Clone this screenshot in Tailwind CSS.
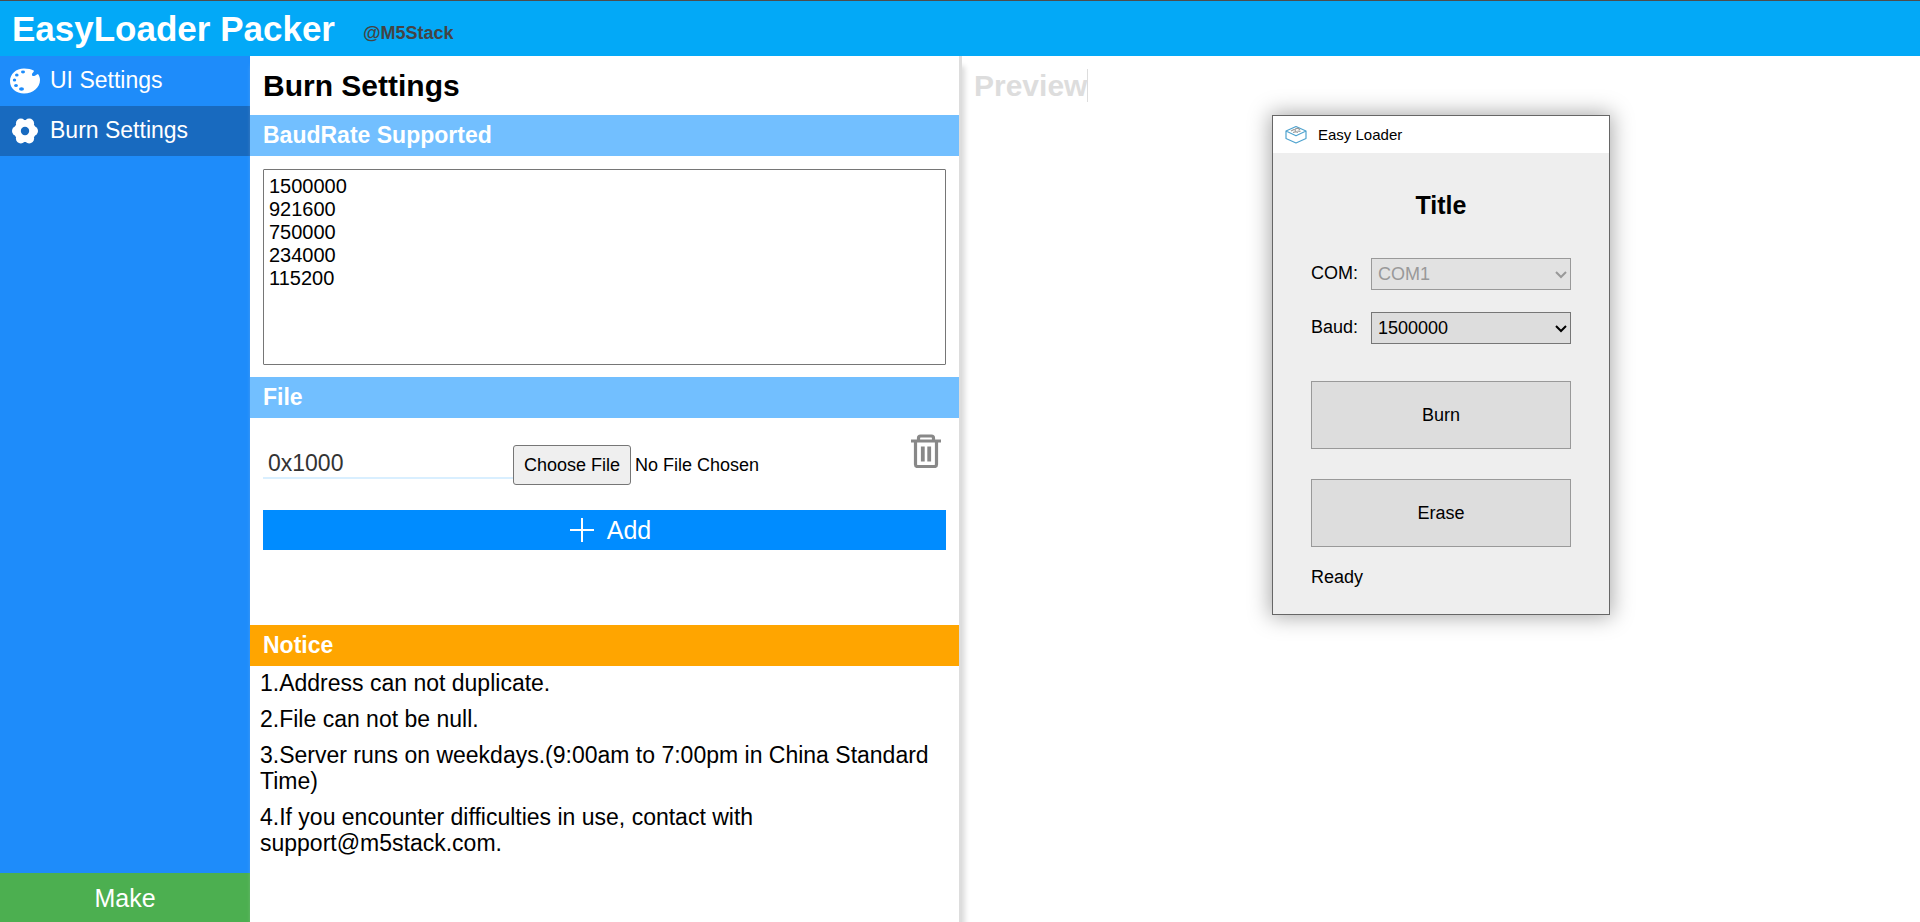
<!DOCTYPE html>
<html lang="en">
<head>
<meta charset="utf-8">
<meta name="viewport" content="width=device-width, initial-scale=1">
<title>EasyLoader Packer</title>
<script src="https://cdn.jsdelivr.net/npm/@tailwindcss/browser@4"></script>
</head>
<body class="flex h-screen flex-col overflow-hidden bg-white font-['Liberation_Sans',Arial,sans-serif] text-black">
  <header class="flex h-14 shrink-0 items-end gap-7 border-t border-[#4d4d4d] bg-[#03a9f7] px-3 pb-[7px]">
    <h1 class="text-[35px] leading-10 font-bold text-white">EasyLoader Packer</h1>
    <span class="text-[18px] leading-8 font-bold text-[#444]">@M5Stack</span>
  </header>

  <div class="flex min-h-0 flex-1">
    <nav class="flex w-[250px] shrink-0 flex-col bg-[#1e8cfa] text-[23px] text-white">
      <a href="#ui" class="flex h-[50px] items-center gap-2.5 px-2.5">
        <svg class="size-[30px]" viewBox="0 0 30 30" aria-hidden="true">
          <path fill="#fff" d="M14 2.500C6 2.500 0 8 0 15.200 0 22.200 6 27.500 14 27.500c9 0 16-6 16-13.500 0-2.500-.8-4.500-2-6-1.500.3-2.500 1.800-4 2-1.500.2-2.300-.6-2-2 .3-1.300 1.800-2 2-3.300C21.500 3.200 18 2.500 14 2.500z"/>
          <g fill="#1e8cfa"><ellipse cx="13" cy="6" rx="2" ry="1.400"/><ellipse cx="6.800" cy="9" rx="1.800" ry="1.500"/><ellipse cx="4.500" cy="14" rx="1.700" ry="1.500"/><ellipse cx="6" cy="19.500" rx="1.900" ry="1.600"/><ellipse cx="11.500" cy="23" rx="2.500" ry="1.800"/></g>
        </svg>
        <span class="pb-0.5">UI Settings</span>
      </a>
      <a href="#burn" aria-current="page" class="flex h-[50px] items-center gap-2.5 bg-[#186abf] px-2.5">
        <svg class="size-[30px]" viewBox="0 0 30 30" aria-hidden="true">
          <g fill="#fff"><circle cx="15" cy="15" r="11"/><circle cx="6.800" cy="15" r="4.800"/><circle cx="23.200" cy="15" r="4.800"/><circle cx="10.800" cy="7.400" r="4.900"/><circle cx="19.200" cy="7.400" r="4.900"/><circle cx="10.800" cy="22.600" r="4.900"/><circle cx="19.200" cy="22.600" r="4.900"/></g>
          <circle cx="15" cy="15" r="4.200" fill="#186abf"/>
        </svg>
        <span class="pb-0.5">Burn Settings</span>
      </a>
      <button type="button" class="mt-auto h-[49px] bg-[#4caf50] pt-0.5 text-[25px]">Make</button>
    </nav>

    <main class="z-10 min-w-0 flex-[709_1_0%] border-r-[3px] border-[#ddd] bg-white shadow-[3px_10px_5px_#ddd]">
      <h2 class="px-[13px] pt-[13px] pb-3 text-[30px] leading-[34px] font-bold">Burn Settings</h2>

      <h3 id="baudrates-title" class="bg-[#72bfff] px-[13px] py-2 text-[23px] leading-[25px] font-bold text-white">BaudRate Supported</h3>
      <div class="px-[13px] pt-[13px] pb-3">
        <textarea aria-labelledby="baudrates-title" class="block h-[196px] w-full resize-none rounded-[1px] border border-[#767676] px-[5px] py-[5px] text-[20px] leading-[23px]">1500000
921600
750000
234000
115200</textarea>
      </div>

      <h3 class="bg-[#72bfff] px-[13px] py-2 text-[23px] leading-[25px] font-bold text-white">File</h3>
      <div class="px-[13px] pt-3">
        <div class="flex items-start">
          <input type="text" aria-label="Address" value="0x1000" class="mt-4 h-[33px] w-[250px] border-b-2 border-[#d9efff] px-[5px] pt-1 text-[23px] text-[#333] outline-none">
          <label for="file" class="mt-[15px] flex h-10 items-center rounded-[3px] border border-[#767676] bg-[#efefef] px-2.5 text-[18px]">Choose File</label>
          <input id="file" type="file" class="sr-only">
          <span class="mt-[15px] ml-1 text-[18px] leading-10">No File Chosen</span>
          <button type="button" aria-label="Delete file" class="mt-0.5 mr-1 ml-auto">
            <svg class="h-9 w-8" viewBox="0 0 32 36" fill="none" stroke="#888" stroke-width="3.200" stroke-linejoin="round" aria-hidden="true">
              <path d="M1 9h30M8.500 9V6q0-2 2-2h11q2 0 2 2v3M5.500 9v23.500q0 2 2 2h17q2 0 2-2V9"/>
              <path stroke-width="3.800" d="M12.800 14.500v15M19.200 14.500v15"/>
            </svg>
          </button>
        </div>
        <button type="button" class="mt-[25px] flex h-10 w-full items-center justify-center gap-[13px] bg-[#008cff] pl-3 text-[25px] text-white">
          <svg class="size-6" viewBox="0 0 24 24" stroke="#fff" stroke-width="2" aria-hidden="true"><path d="M12 0v24M0 12h24"/></svg>
          <span class="pt-0.5">Add</span>
        </button>
      </div>

      <h3 class="mt-[75px] bg-[#ffa500] px-[13px] py-2 text-[23px] leading-[25px] font-bold text-white">Notice</h3>
      <div class="flex flex-col gap-2.5 px-2.5 pt-1 text-[23px] leading-[26px]">
        <p>1.Address can not duplicate.</p>
        <p>2.File can not be null.</p>
        <p>3.Server runs on weekdays.(9:00am to 7:00pm in China Standard Time)</p>
        <p>4.If you encounter difficulties in use, contact with support@m5stack.com.</p>
      </div>
    </main>

    <aside class="flex min-w-0 flex-[958_1_0%] flex-col items-center">
      <h2 class="mt-[13px] ml-3 self-start border-r border-[#ddd] text-[30px] leading-[33px] font-bold text-[#ddd]">Preview</h2>
      <section class="mt-[13px] w-[338px] border border-[#666] bg-[#eee] text-[18px] shadow-[0_0_20px_2px_#aaa]">
        <div class="flex h-[37px] items-center gap-[11px] bg-white px-3 text-[15px]">
          <svg class="h-5 w-[22px]" viewBox="0 0 22 20" fill="none" stroke="#4fa3cf" stroke-width="1.200" stroke-linejoin="round" aria-hidden="true">
            <path d="M11 1.500 21 6v7.500L11 18 1 13.500V6zM1 6l10 4.800L21 6"/>
            <path stroke="#999" d="M6 6l3-1.500 2 1M10 4l3-.8 2 1.500M8 7.500l3-.8 2 .8M12.500 6l3 .300"/>
          </svg>
          <span class="pt-px">Easy Loader</span>
        </div>
        <div class="px-[38px] pt-[37px] pb-6">
          <h3 class="text-center text-[25px] leading-[30px] font-bold">Title</h3>
          <div class="mt-[38px] flex justify-between">
            <label for="com" class="leading-[30px]">COM:</label>
            <div class="relative w-[200px]">
              <select id="com" disabled class="block h-8 w-full appearance-none border border-[#999] bg-[#e2e2e2] px-1.5 text-[#999]"><option>COM1</option></select>
              <svg class="pointer-events-none absolute top-3 right-1 h-2.5 w-3" viewBox="0 0 12 10" fill="none" stroke="#999" stroke-width="2" aria-hidden="true"><path d="M1 2l5 5 5-5"/></svg>
            </div>
          </div>
          <div class="mt-[22px] flex justify-between">
            <label for="baud" class="leading-[30px]">Baud:</label>
            <div class="relative w-[200px]">
              <select id="baud" class="block h-8 w-full appearance-none border border-[#767676] bg-[#ddd] px-1.5"><option>1500000</option><option>921600</option><option>750000</option><option>234000</option><option>115200</option></select>
              <svg class="pointer-events-none absolute top-3 right-1 h-2.5 w-3" viewBox="0 0 12 10" fill="none" stroke="#000" stroke-width="2" aria-hidden="true"><path d="M1 2l5 5 5-5"/></svg>
            </div>
          </div>
          <button type="button" class="mt-[37px] block h-[68px] w-full border border-[#999] bg-[#ddd]">Burn</button>
          <button type="button" class="mt-[30px] block h-[68px] w-full border border-[#999] bg-[#ddd]">Erase</button>
          <p class="mt-[17px] leading-[26px]">Ready</p>
        </div>
      </section>
    </aside>
  </div>
</body>
</html>
